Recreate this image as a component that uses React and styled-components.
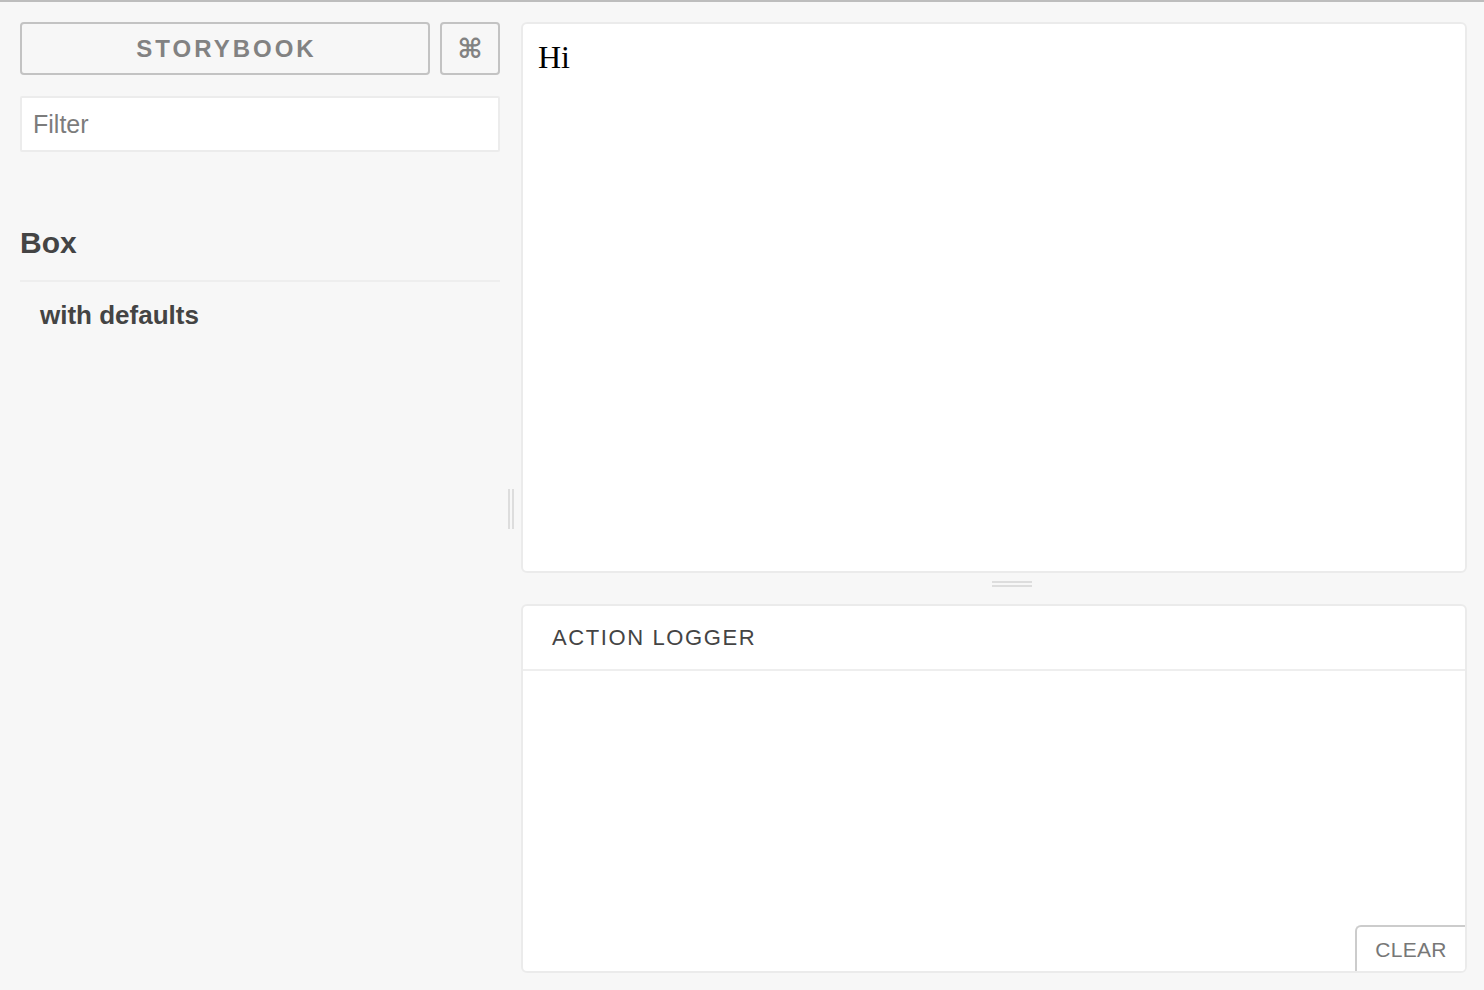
import React from "react";
import styled, { createGlobalStyle } from "styled-components";

const GlobalStyle = createGlobalStyle`
  html, body {
    margin: 0;
    padding: 0;
    background: #f7f7f7;
  }
  * {
    box-sizing: border-box;
  }
`;

const Layout = styled.div`
  width: 1484px;
  height: 990px;
  border-top: 2px solid #bdbdbd;
  background: #f7f7f7;
  padding: 20px 17px 17px 20px;
  display: flex;
  font-family: "Liberation Sans", Arial, sans-serif;
`;

const LeftPanel = styled.div`
  width: 480px;
  display: flex;
  flex-direction: column;
`;

const HeaderRow = styled.div`
  display: flex;
  gap: 10px;
  height: 53px;
`;

const HeaderButton = styled.button`
  flex: ${(p) => (p.$grow ? 1 : "0 0 60px")};
  height: 53px;
  border: 2px solid #c3c3c3;
  border-radius: 4px;
  background: transparent;
  color: #828282;
  font-family: ${(p) =>
    p.$glyph ? '"DejaVu Sans", sans-serif' : '"Liberation Sans", Arial, sans-serif'};
  font-size: ${(p) => (p.$glyph ? "27px" : "24px")};
  font-weight: 700;
  letter-spacing: ${(p) => (p.$glyph ? "0" : "3px")};
  padding: 0;
  padding-left: ${(p) => (p.$glyph ? "0" : "3px")};
  display: flex;
  align-items: center;
  justify-content: center;
  cursor: pointer;
`;

const FilterInput = styled.input`
  margin-top: 21px;
  height: 56px;
  width: 100%;
  border: 2px solid #ececec;
  border-radius: 2px;
  background: #fff;
  padding: 0 11px;
  font-family: "Liberation Sans", Arial, sans-serif;
  font-size: 25px;
  color: #444;
  outline: none;
  &::placeholder {
    color: #7c7c7c;
  }
`;

const KindTitle = styled.div`
  margin-top: 73px;
  padding-bottom: 19px;
  border-bottom: 2px solid #eeeeee;
  font-size: 30px;
  line-height: 36px;
  font-weight: 700;
  color: #444;
`;

const StoryItem = styled.div`
  margin-top: 17px;
  padding-left: 20px;
  font-size: 26px;
  line-height: 32px;
  font-weight: 700;
  color: #444;
  cursor: pointer;
`;

const VGutter = styled.div`
  width: 21px;
  display: flex;
  align-items: center;
  justify-content: center;
`;

const VHandle = styled.div`
  width: 6px;
  height: 40px;
  margin-top: 22px;
  border-left: 2px solid #dddddd;
  border-right: 2px solid #dddddd;
`;

const RightPanel = styled.div`
  flex: 1;
  display: flex;
  flex-direction: column;
`;

const Card = styled.div`
  background: #fff;
  border: 2px solid #ebebeb;
  border-radius: 6px;
  overflow: hidden;
`;

const Preview = styled(Card)`
  height: 551px;
  padding: 15px 15px;
  font-family: "Liberation Serif", "Times New Roman", serif;
  font-size: 32px;
  color: #000;
`;

const HGutter = styled.div`
  height: 31px;
  display: flex;
  justify-content: center;
  padding-top: 8px;
`;

const HHandle = styled.div`
  width: 40px;
  height: 6px;
  margin-left: 36px;
  border-top: 2px solid #dddddd;
  border-bottom: 2px solid #dddddd;
`;

const Logger = styled(Card)`
  flex: 1;
  display: flex;
  flex-direction: column;
`;

const LoggerHeader = styled.div`
  height: 65px;
  border-bottom: 2px solid #eeeeee;
  padding-left: 29px;
  display: flex;
  align-items: center;
  font-size: 22px;
  letter-spacing: 1.6px;
  color: #444;
`;

const LogArea = styled.div`
  flex: 1;
  display: flex;
  align-items: flex-end;
  justify-content: flex-end;
`;

const ClearButton = styled.button`
  width: 110px;
  height: 46px;
  border: none;
  border-top: 2px solid #cccccc;
  border-left: 2px solid #cccccc;
  border-top-left-radius: 6px;
  background: #fff;
  color: #777;
  font-family: "Liberation Sans", Arial, sans-serif;
  font-size: 21px;
  letter-spacing: 0.3px;
  padding: 2px 0 0;
  cursor: pointer;
`;

const App = () => {
  return (
    <>
      <GlobalStyle />
      <Layout>
        <LeftPanel>
          <HeaderRow>
            <HeaderButton $grow>STORYBOOK</HeaderButton>
            <HeaderButton $glyph>⌘</HeaderButton>
          </HeaderRow>
          <FilterInput placeholder="Filter" />
          <KindTitle>Box</KindTitle>
          <StoryItem>with defaults</StoryItem>
        </LeftPanel>
        <VGutter>
          <VHandle />
        </VGutter>
        <RightPanel>
          <Preview>Hi</Preview>
          <HGutter>
            <HHandle />
          </HGutter>
          <Logger>
            <LoggerHeader>ACTION LOGGER</LoggerHeader>
            <LogArea>
              <ClearButton>CLEAR</ClearButton>
            </LogArea>
          </Logger>
        </RightPanel>
      </Layout>
    </>
  );
};

export default App;
